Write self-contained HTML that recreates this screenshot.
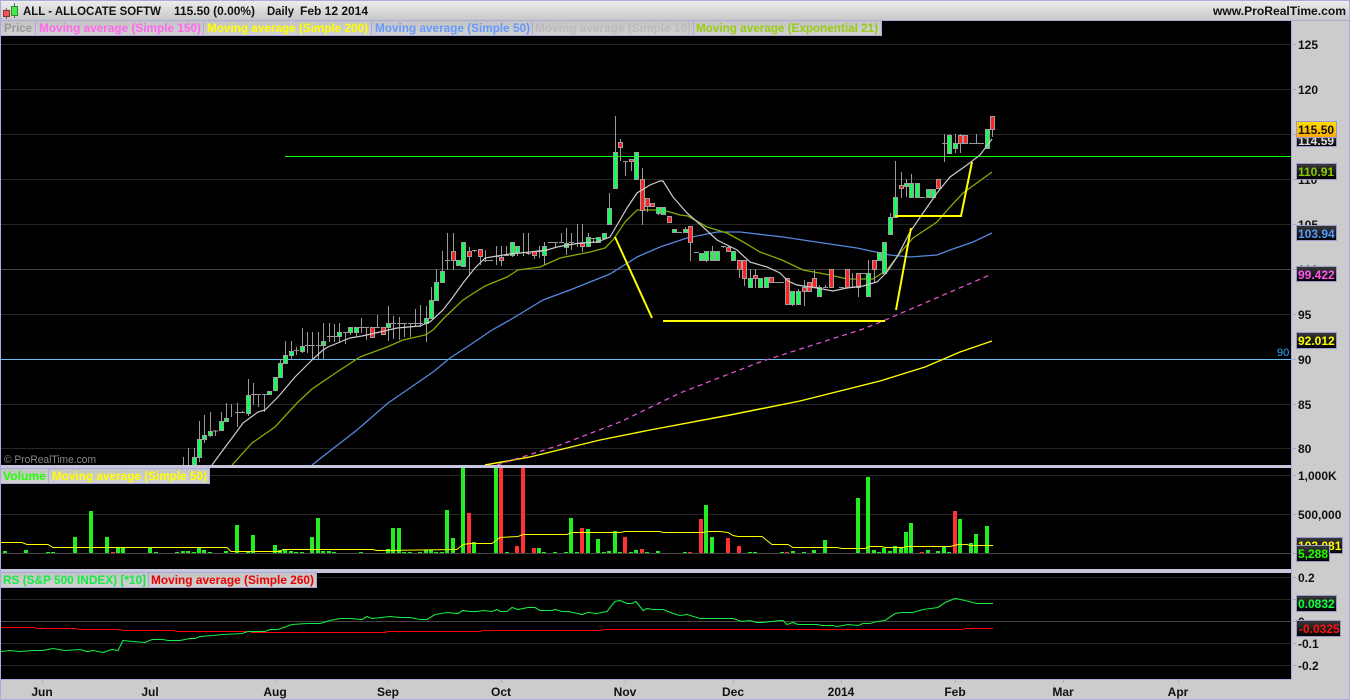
<!DOCTYPE html>
<html><head><meta charset="utf-8"><title>ALL - ALLOCATE SOFTW</title>
<style>
html,body{margin:0;padding:0;background:#000;width:1350px;height:700px;overflow:hidden}
svg{display:block}
text{font-family:"Liberation Sans",Arial,sans-serif;font-size:12px;font-weight:bold}
</style></head><body>
<svg xmlns="http://www.w3.org/2000/svg" width="1350" height="700" viewBox="0 0 1350 700">
<defs>
<linearGradient id="top" x1="0" y1="0" x2="0" y2="1"><stop offset="0" stop-color="#eeeeee"/><stop offset="1" stop-color="#c8c8c8"/></linearGradient>
<linearGradient id="leg" x1="0" y1="0" x2="0" y2="1"><stop offset="0" stop-color="#c4c4c4"/><stop offset="1" stop-color="#d0d0d0"/></linearGradient>
<linearGradient id="dark" x1="0" y1="0" x2="0" y2="1"><stop offset="0" stop-color="#3a3a3a"/><stop offset="1" stop-color="#000"/></linearGradient>
<linearGradient id="gold" x1="0" y1="0" x2="0" y2="1"><stop offset="0" stop-color="#ffdd00"/><stop offset="1" stop-color="#ffaa00"/></linearGradient>
<clipPath id="cp1"><rect x="1" y="21" width="1290" height="444"/></clipPath>
<clipPath id="cp2"><rect x="1" y="468" width="1290" height="101"/></clipPath>
</defs>
<rect width="1350" height="700" fill="#cccccc"/>
<rect x="0" y="0" width="1350" height="20" fill="url(#top)"/>
<rect x="1" y="21" width="1290" height="444" fill="#000"/>
<rect x="1" y="468" width="1290" height="101" fill="#000"/>
<rect x="1" y="573" width="1290" height="106" fill="#000"/>
<rect x="0" y="465" width="1292" height="3" fill="#c6c6dc"/>
<rect x="0" y="569" width="1292" height="4" fill="#c6c6dc"/>
<path d="M0 .5H1350M0 20.5H1350M.5 0V700M1349.5 0V700M0 699.5H1350M1291.5 21V679M0 679.5H1292" stroke="#aaaadd" stroke-width="1" fill="none"/>

<!-- grid -->
<path d="M1 44.5H1291M1 89.5H1291M1 134.5H1291M1 179.5H1291M1 224.5H1291M1 314.5H1291M1 404.5H1291M1 448.5H1291M1 475.5H1291M1 514.5H1291M1 577.5H1291M1 599.5H1291M1 643.5H1291M1 665.5H1291" stroke="#262626" fill="none"/>
<path d="M1 269.5H1291M1 553.5H1291M1 621.5H1291" stroke="#444" fill="none"/>
<path d="M1292 44.5h4M1292 89.5h4M1292 134.5h4M1292 179.5h4M1292 224.5h4M1292 269.5h4M1292 314.5h4M1292 359.5h4M1292 404.5h4M1292 448.5h4M1292 475.5h4M1292 514.5h4M1292 553.5h4M1292 577.5h4M1292 599.5h4M1292 621.5h4M1292 643.5h4M1292 665.5h4M42.5 679v4M150.5 679v4M275.5 679v4M388.5 679v4M501.5 679v4M625.5 679v4M733.5 679v4M841.5 679v4M955.5 679v4M1063.5 679v4M1178.5 679v4" stroke="#aaaadd" fill="none"/>

<!-- price chart -->
<g clip-path="url(#cp1)">
<path d="M1 359.5H1291" stroke="#66bbee"/>
<path d="M285 156.5H1291" stroke="#00ff00"/>
<polyline fill="none" stroke="#ffff00" stroke-width="1.4" points="485,465 530,457 600,440 650,430 730,415 800,401 880,381 925,367 960,352 992,341"/>
<polyline fill="none" stroke="#dd55cc" stroke-width="1.3" stroke-dasharray="5 4" points="497,465 560,445 620,422 680,393 760,362 863,329 883,321 992,274"/>
<polyline fill="none" stroke="#5588dd" stroke-width="1.3" points="312,465 335,447 357,430 388,403 407,390 433,372 450,358 470,345 492,330 510,320 543,300 570,290 610,274 637,257 660,247 687,238 717,232 740,232 783,237 823,243 857,248 890,255 910,257 937,255 950,250 973,242 992,233"/>
<polyline fill="none" stroke="#88aa00" stroke-width="1.3" points="232,465 252,443 275,427 297,403 312,389 337,372 360,357 387,347 403,340 425,335 433,330 445,317 463,300 485,286 507,277 518,270 540,267 560,258 590,252 605,248 613,240 625,222 637,210 663,210 680,215 688,216 707,227 727,233 745,243 760,252 782,260 803,270 830,275 847,279 873,279 887,270 900,253 913,238 937,222 950,207 963,193 992,172"/>
<path fill="none" stroke="#999999" d="M183.5 457V466M188.5 448V466M194.5 448V466M199.5 421V462M204.5 415V443M210.5 412V437M215.5 430V436M221.5 412V430M226.5 403V422M231.5 404V417M237.5 403V427M242.5 411V413M248.5 379V416M253.5 383V405M258.5 394V407M264.5 394V412M275.5 377V390M280.5 360V377M285.5 341V363M291.5 341V359M296.5 347V355M302.5 328V353M307.5 332V353M312.5 332V360M318.5 332V359M323.5 323V359M329.5 323V342M334.5 324V342M339.5 323V343M345.5 332V344M350.5 327V335M356.5 327V336M361.5 318V333M366.5 327V340M377.5 315V327M388.5 306V341M393.5 316V339M399.5 317V340M404.5 323V337M410.5 323V337M415.5 309V327M420.5 305V327M426.5 306V342M431.5 287V318M436.5 269V300M442.5 251V282M447.5 233V270M453.5 233V270M458.5 260V265M463.5 242V266M469.5 247V275M474.5 250V252M480.5 249V265M485.5 250V262M496.5 246V265M501.5 246V266M506.5 246V255M512.5 242V257M517.5 246V256M523.5 233V256M528.5 233V255M534.5 251V259M539.5 246V258M544.5 242V265M555.5 242V247M561.5 233V242M566.5 228V255M571.5 233V250M577.5 224V247M582.5 224V252M588.5 233V246M593.5 238V243M609.5 193V224M615.5 116V188M620.5 139V161M625.5 161V176M631.5 159V171M642.5 168V225M647.5 198V212M658.5 207V215M685.5 227V232M690.5 226V261M706.5 251V262M712.5 246V260M723.5 246V248M728.5 246V251M739.5 260V278M744.5 260V286M750.5 269V288M755.5 269V288M776.5 282V283M792.5 291V306M798.5 289V304M804.5 280V306M814.5 270V287M819.5 285V296M825.5 285V288M852.5 273V288M858.5 273V297M868.5 260V296M874.5 260V283M890.5 213V234M895.5 161V217M901.5 172V198M906.5 179V197M911.5 174V197M944.5 134V162M949.5 134V153M955.5 134V153M960.5 134V153M976.5 134V143M987.5 129V148M992.5 116V137"/>
<path fill="none" stroke="#999999" d="M213 431h5M235 412.5h5M240 412.5h5M251 394.5h5M256 394.5h5M262 394.5h5M294 350.5h5M305 345.5h5M310 345.5h5M316 345.5h5M327 336.5h5M332 336.5h5M343 332.5h5M359 327.5h5M364 327.5h5M375 327.5h5M391 323.5h5M397 323.5h5M402 323.5h5M408 323.5h5M413 323.5h5M418 323.5h5M445 260.5h5M472 250.5h5M483 260.5h5M488 260.5h5M494 256.5h5M504 255.5h5M521 252.5h5M526 253.5h5M537 251.5h5M548 242.5h5M553 242.5h5M559 242.5h5M569 242.5h5M575 243.5h5M591 238.5h5M623 161.5h5M677 232.5h5M694 252.5h5M721 246.5h5M774 282.5h5M779 282.5h5M823 287.5h5M839 287.5h5M850 287.5h5M861 273.5h5M920 197.5h5M942 143.5h5M969 143.5h5M974 143.5h5M979 143.5h5"/>
<path fill="#11ff55" stroke="#a0a0a0" d="M192.500 457.500h4v8h-4zM197.500 439.500h4v18h-4zM202.500 435.500h4v4h-4zM208.500 431.500h4v4h-4zM219.500 421.500h4v9h-4zM224.500 418.500h4v3h-4zM246.500 395.500h4v18h-4zM267.500 391.500h4v3h-4zM273.500 377.500h4v13h-4zM278.500 363.500h4v14h-4zM283.500 355.500h4v8h-4zM289.500 351.500h4v4h-4zM300.500 346.500h4v5h-4zM321.500 341.500h4v4h-4zM337.500 332.500h4v4h-4zM348.500 327.500h4v5h-4zM354.500 327.500h4v5h-4zM386.500 323.500h4v4h-4zM424.500 318.500h4v5h-4zM429.500 300.500h4v18h-4zM434.500 282.500h4v18h-4zM440.500 271.500h4v11h-4zM456.500 260.500h4v5h-4zM461.500 242.500h4v24h-4zM510.500 242.500h4v13h-4zM515.500 246.500h4v6h-4zM542.500 246.500h4v9h-4zM564.500 243.500h4v4h-4zM586.500 237.500h4v9h-4zM596.500 237.500h4v5h-4zM602.500 233.500h4v5h-4zM607.500 208.500h4v16h-4zM613.500 152.500h4v36h-4zM634.500 152.500h4v27h-4zM656.500 207.500h4v6h-4zM661.500 207.500h4v7h-4zM672.500 229.500h4v3h-4zM683.500 229.500h4v3h-4zM699.500 253.500h4v7h-4zM704.500 251.500h4v9h-4zM710.500 251.500h4v9h-4zM715.500 251.500h4v9h-4zM731.500 251.500h4v9h-4zM748.500 278.500h4v9h-4zM758.500 278.500h4v9h-4zM764.500 277.500h4v10h-4zM790.500 291.500h4v13h-4zM796.500 291.500h4v13h-4zM817.500 287.500h4v9h-4zM866.500 273.500h4v23h-4zM877.500 252.500h4v8h-4zM882.500 242.500h4v31h-4zM888.500 217.500h4v17h-4zM893.500 197.500h4v20h-4zM904.500 183.500h4v3h-4zM909.500 183.500h4v14h-4zM915.500 183.500h4v14h-4zM926.500 189.500h4v8h-4zM931.500 189.500h4v8h-4zM947.500 135.500h4v18h-4zM953.500 143.500h4v5h-4zM985.500 129.500h4v19h-4z"/>
<path fill="#ff2222" stroke="#a0a0a0" d="M370.500 327.500h4v10h-4zM381.500 327.500h4v7h-4zM451.500 251.500h4v9h-4zM467.500 251.500h4v5h-4zM478.500 249.500h4v7h-4zM499.500 257.500h4v3h-4zM532.500 251.500h4v4h-4zM580.500 243.500h4v3h-4zM618.500 142.500h4v5h-4zM629.500 159.500h4v2h-4zM640.500 179.500h4v31h-4zM645.500 198.500h4v8h-4zM650.500 203.500h4v3h-4zM667.500 216.500h4v6h-4zM688.500 226.500h4v16h-4zM726.500 247.500h4v4h-4zM737.500 260.500h4v9h-4zM742.500 260.500h4v18h-4zM753.500 275.500h4v3h-4zM769.500 277.500h4v5h-4zM785.500 278.500h4v26h-4zM802.500 287.500h4v4h-4zM807.500 282.500h4v9h-4zM812.500 278.500h4v9h-4zM829.500 269.500h4v18h-4zM845.500 269.500h4v18h-4zM856.500 273.500h4v14h-4zM872.500 260.500h4v9h-4zM899.500 185.500h4v3h-4zM936.500 179.500h4v9h-4zM958.500 135.500h4v8h-4zM963.500 135.500h4v8h-4zM990.500 116.500h4v13h-4z"/>
<polyline fill="none" stroke="#cccccc" stroke-width="1.2" points="212,465 223,450 232,438 243,423 258,412 265,410 278,397 295,377 313,359 323,350 328,347 340,342 350,338 362,336 380,332 397,328 420,326 427,323 430,322 443,310 453,297 463,283 475,268 485,258 497,256 510,254 530,252 547,250 557,247 580,243 597,242 610,237 620,220 627,208 637,193 650,185 660,181 663,181 673,197 687,213 703,227 717,240 727,245 737,250 750,262 767,267 780,273 788,281 797,285 817,288 833,291 847,288 863,286 877,282 887,272 897,257 910,232 923,213 937,193 950,177 967,165 980,155 992,139"/>
<path fill="none" stroke="#ffff00" stroke-width="2" d="M615 237L652 318M663 321H885M896 310L911 228M895 216H961L972 162"/>
</g>
<text x="4" y="463" fill="#888888" style="font-size:11px;font-weight:normal" textLength="92" lengthAdjust="spacingAndGlyphs">© ProRealTime.com</text>

<!-- volume -->
<g clip-path="url(#cp2)">
<path fill="#22ee22" d="M3 551h4v2h-4zM24 550h4v3h-4zM46 552h4v1h-4zM51 552h4v1h-4zM73 537h4v16h-4zM89 511h4v42h-4zM105 537h4v16h-4zM116 548h4v5h-4zM121 548h4v5h-4zM148 548h4v5h-4zM154 552h4v1h-4zM175 552h4v1h-4zM181 551h4v2h-4zM186 551h4v2h-4zM192 552h4v1h-4zM197 548h4v5h-4zM202 550h4v3h-4zM208 552h4v1h-4zM224 551h4v2h-4zM235 525h4v28h-4zM246 551h4v2h-4zM251 535h4v18h-4zM273 545h4v8h-4zM278 550h4v3h-4zM283 549h4v4h-4zM289 551h4v2h-4zM294 552h4v1h-4zM300 552h4v1h-4zM310 537h4v16h-4zM316 518h4v35h-4zM321 551h4v2h-4zM327 551h4v2h-4zM332 552h4v1h-4zM359 552h4v1h-4zM386 549h4v4h-4zM391 528h4v25h-4zM397 528h4v25h-4zM402 552h4v1h-4zM408 552h4v1h-4zM418 552h4v1h-4zM424 550h4v3h-4zM429 550h4v3h-4zM434 552h4v1h-4zM440 552h4v1h-4zM445 510h4v43h-4zM451 538h4v15h-4zM461 468h4v85h-4zM472 542h4v11h-4zM494 468h4v85h-4zM505 552h4v1h-4zM537 548h4v5h-4zM542 552h4v1h-4zM553 552h4v1h-4zM564 552h4v1h-4zM569 518h4v35h-4zM575 552h4v1h-4zM586 529h4v24h-4zM596 539h4v14h-4zM602 552h4v1h-4zM607 551h4v2h-4zM613 531h4v22h-4zM618 552h4v1h-4zM629 552h4v1h-4zM634 550h4v3h-4zM645 552h4v1h-4zM656 551h4v2h-4zM683 552h4v1h-4zM704 505h4v48h-4zM710 537h4v16h-4zM748 552h4v1h-4zM753 552h4v1h-4zM780 552h4v1h-4zM791 551h4v2h-4zM802 552h4v1h-4zM812 550h4v3h-4zM823 540h4v13h-4zM856 498h4v55h-4zM866 477h4v76h-4zM872 550h4v3h-4zM877 552h4v1h-4zM882 548h4v5h-4zM888 551h4v2h-4zM893 546h4v7h-4zM899 548h4v5h-4zM904 532h4v21h-4zM909 523h4v30h-4zM926 550h4v3h-4zM936 551h4v2h-4zM942 547h4v6h-4zM947 552h4v1h-4zM958 519h4v34h-4zM969 543h4v10h-4zM974 534h4v19h-4zM985 526h4v27h-4z"/>
<path fill="#ff3333" d="M111 552h4v1h-4zM467 513h4v40h-4zM499 468h4v85h-4zM515 546h4v7h-4zM521 468h4v85h-4zM532 548h4v5h-4zM580 528h4v25h-4zM623 537h4v16h-4zM640 549h4v4h-4zM688 552h4v1h-4zM699 519h4v34h-4zM726 538h4v15h-4zM737 546h4v7h-4zM785 552h4v1h-4zM920 552h4v1h-4zM953 511h4v42h-4z"/>
<polyline fill="none" stroke="#ffff00" stroke-width="1" transform="translate(0 .5)" points="1,542 22,542 27,544 48,544 53,547 227,547 231,551 280,551 283,549 373,549 377,550 457,549 463,544 470,543 492,543 500,537 518,536 523,534 567,534 572,532 620,532 625,531 660,531 663,532 703,532 707,531 720,531 728,532 733,535 738,536 762,536 772,544 788,544 793,547 837,547 842,548 865,548 870,546 882,546 885,547 903,547 907,546 950,546 958,544 967,544 970,545 993,545"/>
</g>

<!-- RS -->
<polyline fill="none" stroke="#ff0000" stroke-width="1" transform="translate(0 .5)" points="1,627 33,627 37,628 75,628 80,629 120,629 123,630 173,630 177,631 250,631 252,632 385,632 388,631 480,631 483,630 600,630 605,629 962,629 965,628 993,628"/>
<polyline fill="none" stroke="#11ee44" stroke-width="1.1" transform="translate(0 .5)" points="1,651 10,650 20,651 33,650 43,650 53,648 65,650 80,649 87,651 93,650 103,652 112,649 118,650 123,640 133,641 145,642 152,639 163,639 168,640 180,640 190,638 195,638 200,636 213,635 223,634 242,633 248,631 265,631 270,629 278,629 292,624 307,623 320,623 330,620 340,618 350,618 362,619 367,616 372,618 390,616 400,617 410,617 420,619 427,619 435,614 447,612 458,613 463,610 470,611 477,611 483,610 492,611 497,609 500,611 507,611 512,607 518,609 528,607 535,607 540,610 552,610 555,609 562,611 568,611 578,613 582,614 588,612 597,613 607,611 615,601 620,600 627,603 632,603 636,601 643,610 647,608 653,609 663,609 673,613 680,615 687,614 700,618 720,618 723,618 733,618 742,621 750,620 757,622 763,622 780,620 783,620 787,624 793,622 798,624 817,624 822,625 833,625 837,626 848,624 858,625 863,623 870,623 877,621 885,620 895,613 902,612 913,612 923,609 938,607 945,602 955,598 965,600 977,603 993,603"/>

<!-- legends -->
<g fill="url(#leg)" stroke="#aaaadd">
<rect x=".5" y="20.500" width="35" height="15"/><rect x="35.500" y="20.500" width="168" height="15"/><rect x="203.500" y="20.500" width="168" height="15"/><rect x="371.500" y="20.500" width="161" height="15"/><rect x="532.500" y="20.500" width="161" height="15"/><rect x="693.500" y="20.500" width="188" height="15"/>
<rect x=".5" y="468.500" width="48" height="15"/><rect x="48.500" y="468.500" width="161" height="15"/>
<rect x=".5" y="572.500" width="148" height="15"/><rect x="148.500" y="572.500" width="168" height="15"/>
</g>
<g lengthAdjust="spacingAndGlyphs">
<text x="4" y="32" fill="#999999" textLength="28" lengthAdjust="spacingAndGlyphs">Price</text>
<text x="39" y="32" fill="#ff66ee" textLength="162" lengthAdjust="spacingAndGlyphs">Moving average (Simple 150)</text>
<text x="207" y="32" fill="#ffff00" textLength="161" lengthAdjust="spacingAndGlyphs">Moving average (Simple 200)</text>
<text x="375" y="32" fill="#6699ff" textLength="155" lengthAdjust="spacingAndGlyphs">Moving average (Simple 50)</text>
<text x="535" y="32" fill="#bbbbbb" textLength="156" lengthAdjust="spacingAndGlyphs">Moving average (Simple 10)</text>
<text x="696" y="32" fill="#99cc11" textLength="182" lengthAdjust="spacingAndGlyphs">Moving average (Exponential 21)</text>
<text x="3" y="480" fill="#22ff00" textLength="43" lengthAdjust="spacingAndGlyphs">Volume</text>
<text x="52" y="480" fill="#ffff00" textLength="155" lengthAdjust="spacingAndGlyphs">Moving average (Simple 50)</text>
<text x="3" y="584" fill="#11ee44" textLength="143" lengthAdjust="spacingAndGlyphs">RS (S&amp;P 500 INDEX) [*10]</text>
<text x="151" y="584" fill="#ee0000" textLength="163" lengthAdjust="spacingAndGlyphs">Moving average (Simple 260)</text>
</g>

<!-- title bar -->
<path d="M6.500 8V19M14.500 3V18" stroke="#666" fill="none"/>
<rect x="3.500" y="10.500" width="6" height="6" fill="#ee5555" stroke="#883333"/>
<rect x="11.500" y="6.500" width="6" height="9" fill="#44ee44" stroke="#338833"/>
<text x="23" y="15" fill="#111" textLength="138" lengthAdjust="spacingAndGlyphs">ALL - ALLOCATE SOFTW</text>
<text x="174" y="15" fill="#111" textLength="81" lengthAdjust="spacingAndGlyphs">115.50 (0.00%)</text>
<text x="267" y="15" fill="#111" textLength="27" lengthAdjust="spacingAndGlyphs">Daily</text>
<text x="300" y="15" fill="#111" textLength="68" lengthAdjust="spacingAndGlyphs">Feb 12 2014</text>
<text x="1213" y="15" fill="#111" textLength="133" lengthAdjust="spacingAndGlyphs">www.ProRealTime.com</text>
<text x="1277" y="356" fill="#33aaff" style="font-size:11px;font-weight:normal">90</text>

<!-- right axis -->
<g fill="#111">
<text x="1298" y="49">125</text><text x="1298" y="94">120</text><text x="1298" y="184">110</text><text x="1298" y="229">105</text><text x="1298" y="274">100</text><text x="1298" y="319">95</text><text x="1298" y="364">90</text><text x="1298" y="409">85</text><text x="1298" y="453">80</text>
<text x="1298" y="480">1,000K</text><text x="1298" y="519">500,000</text>
<text x="1298" y="582">0.2</text><text x="1298" y="604">0.1</text><text x="1298" y="626">0</text><text x="1298" y="648">-0.1</text><text x="1298" y="670">-0.2</text>
</g>
<!-- badges -->
<g stroke="#9999cc" fill="url(#dark)">
<rect x="1296.500" y="135.500" width="40" height="11"/>
<rect x="1296.500" y="163.500" width="40" height="16"/>
<rect x="1296.500" y="225.500" width="40" height="15"/>
<rect x="1296.500" y="266.500" width="40" height="15"/>
<rect x="1296.500" y="332.500" width="40" height="16"/>
<rect x="1296.500" y="537.500" width="46" height="16"/>
<rect x="1296.500" y="595.500" width="40" height="16"/>
<rect x="1296.500" y="620.500" width="44" height="16"/>
</g>
<text x="1298" y="145" fill="#dddddd">114.59</text>
<text x="1298" y="176" fill="#88cc00">110.91</text>
<text x="1298" y="238" fill="#5599ff">103.94</text>
<text x="1298" y="279" fill="#ff55ee">99.422</text>
<text x="1298" y="345" fill="#ffff00">92.012</text>
<text x="1298" y="550" fill="#ffff00">103,081</text>
<rect x="1296.500" y="545.500" width="33" height="16" fill="url(#dark)" stroke="#9999cc"/>
<text x="1298" y="558" fill="#22ff00">5,288</text>
<text x="1298" y="608" fill="#11ff44">0.0832</text>
<text x="1299" y="633" fill="#ff1111">-0.0325</text>
<rect x="1296.500" y="121.500" width="40" height="16" fill="url(#gold)" stroke="#9999cc"/>
<text x="1298" y="134" fill="#111">115.50</text>

<!-- bottom axis -->
<g fill="#111" text-anchor="middle">
<text x="42" y="696">Jun</text><text x="150" y="696">Jul</text><text x="275" y="696">Aug</text><text x="388" y="696">Sep</text><text x="501" y="696">Oct</text><text x="625" y="696">Nov</text><text x="733" y="696">Dec</text><text x="841" y="696">2014</text><text x="955" y="696">Feb</text><text x="1063" y="696">Mar</text><text x="1178" y="696">Apr</text>
</g>
</svg>
</body></html>
